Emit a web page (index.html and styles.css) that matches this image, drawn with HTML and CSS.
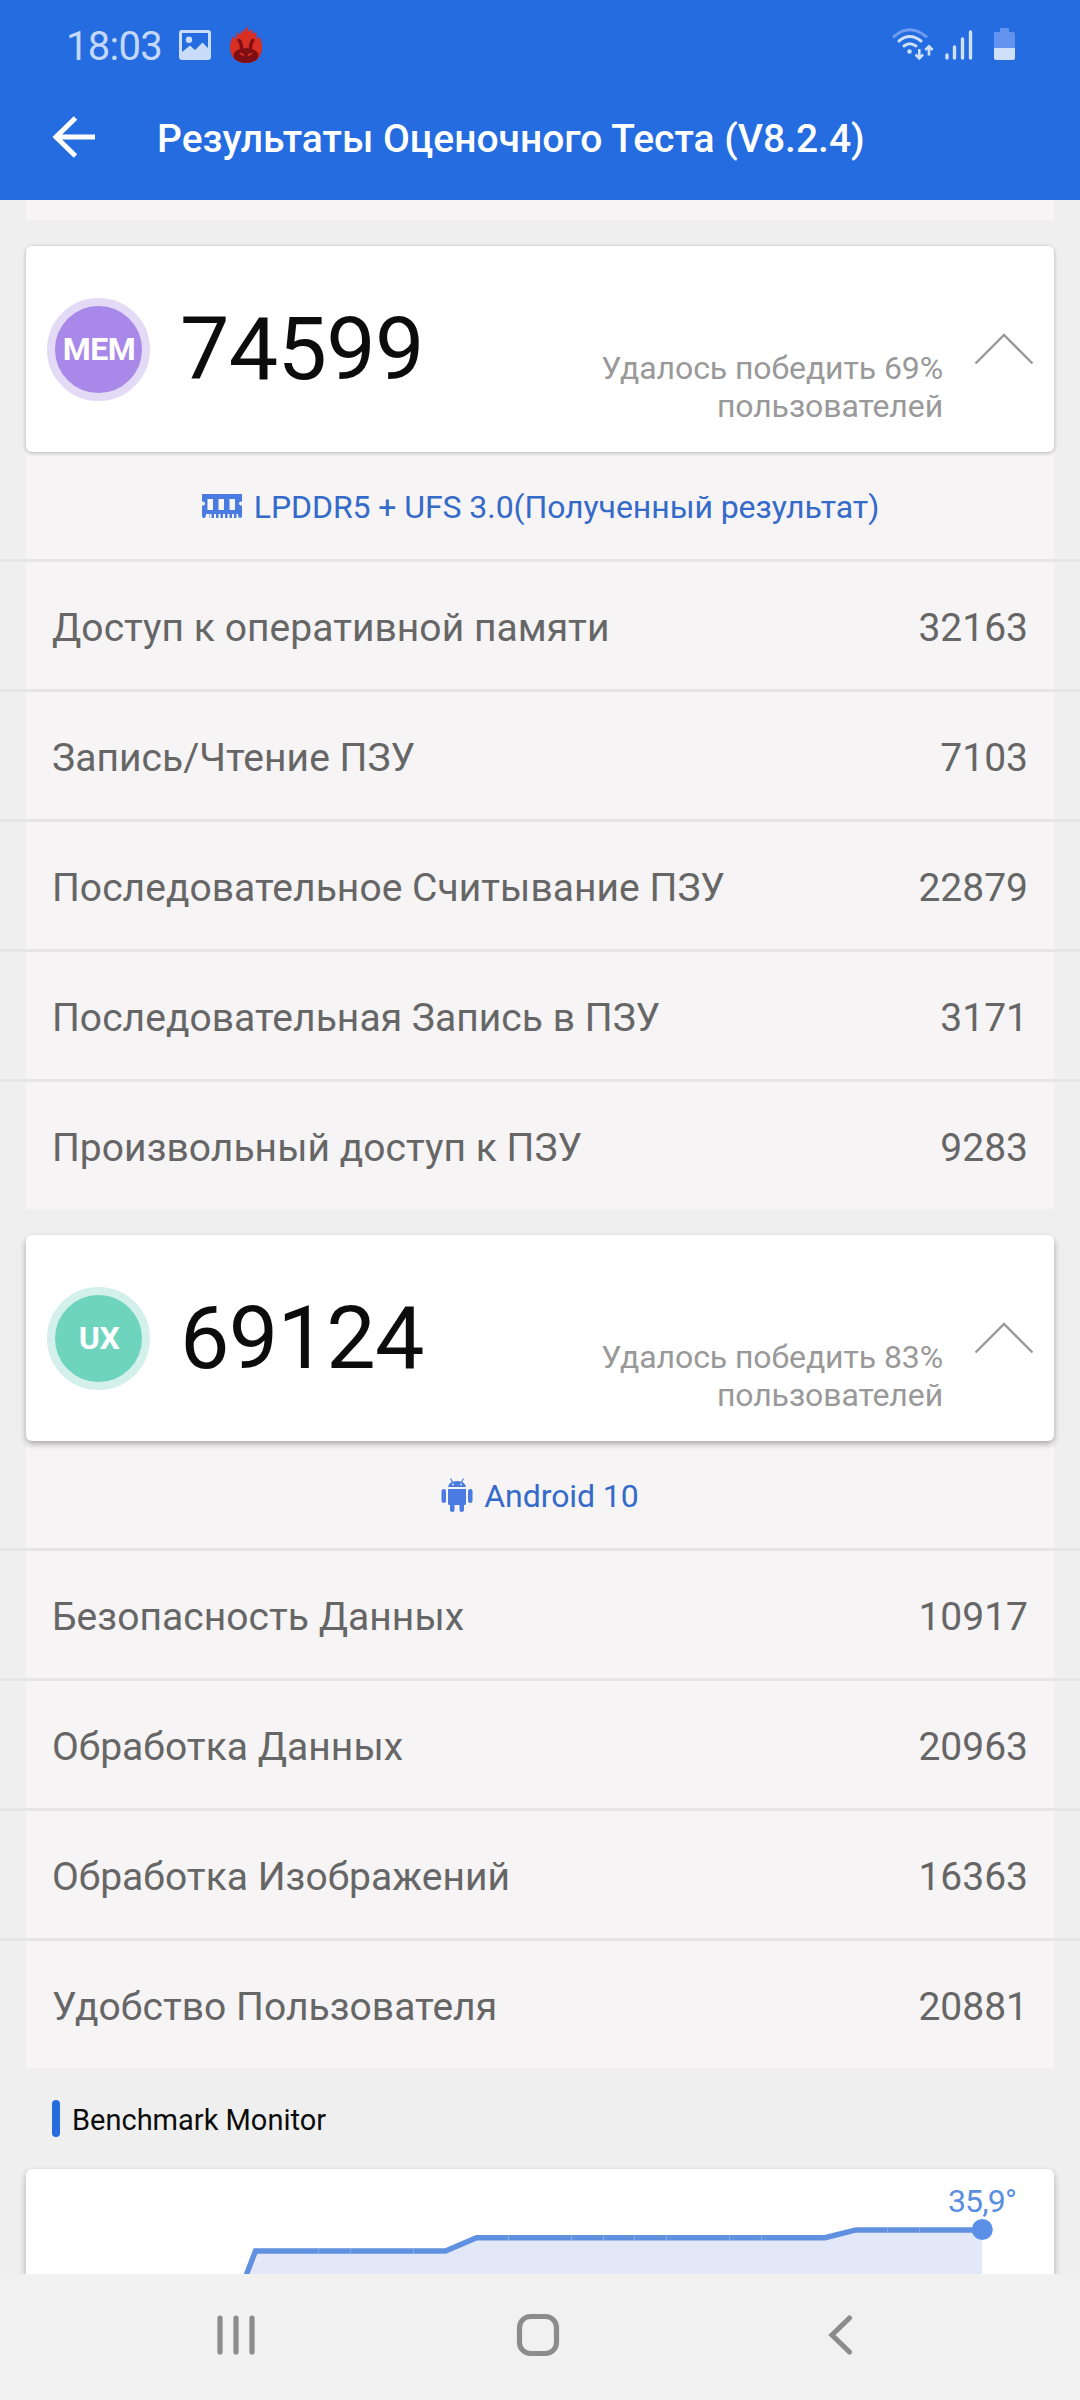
FILE: index.html
```
<!DOCTYPE html>
<html lang="ru">
<head>
<meta charset="utf-8">
<title>Результаты Оценочного Теста</title>
<link rel="stylesheet" href="styles.css">
</head>
<body>
<div class="screen">
  <header class="top">
    <div class="status">
      <span class="clock">18:03</span>
      <svg class="ic-photo" width="32" height="30" viewBox="0 0 32 30"><path fill="#c9dcfa" fill-rule="evenodd" d="M3 0H29Q32 0 32 3V27Q32 30 29 30H3Q0 30 0 27V3Q0 0 3 0ZM3 3V22L11 15.500L16 20L23.500 12.500L29 18V3ZM10 6.500A3.200 3.200 0 1 1 10 12.900A3.200 3.200 0 1 1 10 6.500Z"/></svg>
      <svg class="ic-antutu" width="34" height="38" viewBox="0 0 34 38"><path fill="#d82f22" d="M17 37C6 37 1 30 1 21C1 16 3 13 4 10L7 13L8 6L11 9L13 4L15 6L18 0L20 6L23 3L24 8L27 6L28 13L31 11C32 15 33 17 33 21C33 30 28 37 17 37Z"/><ellipse cx="17" cy="29.500" rx="12.500" ry="7.500" fill="#7e0e14"/><path d="M10 14.500Q12 15.500 12.500 22M24 14.500Q22 15.500 21.500 22" fill="none" stroke="#7e0e14" stroke-width="3.400" stroke-linecap="round"/><path d="M11.500 27.500L14.500 29M22.500 27.500L19.500 29" stroke="#d82f22" stroke-width="1.700" stroke-linecap="round"/></svg>
      <svg class="ic-signal" width="126" height="36" viewBox="0 0 126 36" fill="none" stroke-linecap="round"><path d="M2 9.500Q17.500 -4 34 9.500" stroke="#6f9ef0" stroke-width="3"/><path d="M7 14Q17.500 5 29 14M12 19Q17.500 14.500 24 19" stroke="#cfe0fb" stroke-width="3"/><circle cx="17.500" cy="24.500" r="2.300" fill="#cfe0fb"/><path d="M27.300 22V31M23.500 27.500L27.300 31.300L31 27.500M37 28.500V20M33.300 23L37 19.300L40.700 23" stroke="#cfe0fb" stroke-width="2.600" stroke-linecap="butt"/><path d="M55 28V31M62.500 20V31M70.500 12V31M78.500 5V31" stroke="#cfe0fb" stroke-width="3.400"/><path d="M102 5H108V1H117V5H121Q123 5 123 7V21H102Z" fill="#6293ee"/><path d="M102 21H123V31Q123 33 121 33H104Q102 33 102 31Z" fill="#cfe0fb"/></svg>
    </div>
    <div class="appbar">
      <svg class="ic-back" width="43" height="42" viewBox="0 0 43 42"><path d="M43 21H4M23.500 2L4 21L23.500 40" fill="none" stroke="#fff" stroke-width="5"/></svg>
      <h1>Результаты Оценочного Теста (V8.2.4)</h1>
    </div>
  </header>
  <main class="content">
    <div class="tail"></div>
    <section class="group">
      <div class="card">
        <div class="badge mem">MEM</div>
        <div class="score">74599</div>
        <div class="beat">Удалось победить 69%<br>пользователей</div>
        <svg class="chev" width="60" height="32" viewBox="0 0 60 32"><path d="M1.500 30.500L30 2L58.500 30.500" fill="none" stroke="#999" stroke-width="2.400"/></svg>
      </div>
      <div class="info mem-info">
        <svg width="42" height="26" viewBox="0 0 42 26"><path fill="#4a7be0" fill-rule="evenodd" d="M1 1H41V8.500Q38 8.500 38 10.500Q38 12.500 41 12.500V23Q41 25 39 25Q37 25 37 21H35.500V25H33V21H31V25H28.500V21H26.500V25H24V21H22V25H19.500V21H17.500V25H15V21H13V25H10.500V21H8.500V25H8V21H5Q5 25 3 25Q1 25 1 23V12.500Q4 12.500 4 10.500Q4 8.500 1 8.500ZM6.500 6V17H12V6ZM17.500 6V17H23V6ZM28.500 6V17H34V6Z"/></svg>
        <span>LPDDR5 + UFS 3.0(Полученный результат)</span>
      </div>
      <div class="row"><span>Доступ к оперативной памяти</span><span>32163</span></div>
      <div class="row"><span>Запись/Чтение ПЗУ</span><span>7103</span></div>
      <div class="row"><span>Последовательное Считывание ПЗУ</span><span>22879</span></div>
      <div class="row"><span>Последовательная Запись в ПЗУ</span><span>3171</span></div>
      <div class="row"><span>Произвольный доступ к ПЗУ</span><span>9283</span></div>
    </section>
    <section class="group">
      <div class="card raised">
        <div class="badge ux">UX</div>
        <div class="score">69124</div>
        <div class="beat">Удалось победить 83%<br>пользователей</div>
        <svg class="chev" width="60" height="32" viewBox="0 0 60 32"><path d="M1.500 30.500L30 2L58.500 30.500" fill="none" stroke="#999" stroke-width="2.400"/></svg>
      </div>
      <div class="info ux-info">
        <svg width="32" height="34" viewBox="0 0 32 34"><g fill="#4a7be0"><path fill-rule="evenodd" d="M7 9Q8 3 16 3Q24 3 25 9ZM12 5.500A.9 .9 0 1 0 12 7.300A.9 .9 0 1 0 12 5.500ZM20 5.500A.9 .9 0 1 0 20 7.300A.9 .9 0 1 0 20 5.500Z"/><path d="M7 11H25V25.500Q25 27 23.500 27H8.500Q7 27 7 25.500Z"/><rect x=".5" y="11" width="4.500" height="14" rx="2.200"/><rect x="27" y="11" width="4.500" height="14" rx="2.200"/><path d="M9 26H13.500V32Q13.500 34 11.300 34Q9 34 9 32ZM18.500 26H23V32Q23 34 20.700 34Q18.500 34 18.500 32Z"/></g><path d="M9.500 .5L11.500 4M22.500 .5L20.500 4" stroke="#4a7be0" stroke-width="1.200"/></svg>
        <span>Android 10</span>
      </div>
      <div class="row"><span>Безопасность Данных</span><span>10917</span></div>
      <div class="row"><span>Обработка Данных</span><span>20963</span></div>
      <div class="row"><span>Обработка Изображений</span><span>16363</span></div>
      <div class="row"><span>Удобство Пользователя</span><span>20881</span></div>
    </section>
    <h2 class="monitor-title">Benchmark Monitor</h2>
    <div class="monitor">
      <svg width="1028" height="105" viewBox="26 2169 1028 105">
        <path d="M246 2274L255.500 2251H445.500L476.500 2237.700H825L856 2230H982V2274Z" fill="#e2e8f8"/>
        <path d="M245.500 2277L255.500 2251H445.500L476.500 2237.700H825L856 2230H982" fill="none" stroke="#6090e0" stroke-width="5.400"/>
        <path d="M318.500 2248.500V2253.500M350.500 2248.500V2253.500M413.500 2248.500V2253.500M508.500 2235V2240M571.500 2235V2240M603.500 2235V2240M634.500 2235V2240M666.500 2235V2240M729.500 2235V2240M761.500 2235V2240M887.500 2227.500V2232.500M919.500 2227.500V2232.500" stroke="#86abea" stroke-width="1"/>
        <circle cx="982.300" cy="2229.500" r="10.500" fill="#5a90e8"/>
        <text x="982" y="2212" text-anchor="middle" class="temp">35,9°</text>
      </svg>
    </div>
  </main>
  <nav class="nav">
    <svg width="1080" height="126" viewBox="0 2274 1080 126" fill="none" stroke="#8c8c8c" stroke-width="5.200" stroke-linecap="round"><path d="M220 2318V2352M236 2318V2352M252 2318V2352"/><rect x="519.500" y="2316.500" width="37" height="37" rx="11"/><path d="M849.500 2318L832 2335L849.500 2352"/></svg>
  </nav>
</div>
</body>
</html>
```
FILE: styles.css
```
* { box-sizing: border-box; }
body { margin: 0; font-family: Roboto, "Liberation Sans", sans-serif; background: #efefef; }
svg { display: block; flex: none; }
.screen { width: 1080px; height: 2400px; display: flex; flex-direction: column; overflow: hidden; }
.top { height: 200px; background: #256ce0; flex: none; }
.status { height: 90px; display: flex; align-items: center; padding: 0 62px 0 66px; color: #c3d8fa; }
.clock { font-size: 40px; line-height: 48px; width: 113px; padding-top: 3px; letter-spacing: -.7px; }
.ic-antutu { margin-left: 18px; }
.ic-signal { margin-left: auto; }
.appbar { height: 94px; display: flex; align-items: center; padding-left: 52px; }
.appbar h1 { margin: 4px 0 0 62px; font-size: 39px; line-height: 48px; font-weight: 500; color: #fff; white-space: nowrap; }
.content { height: 2074px; flex: none; overflow: hidden; }
.tail { height: 20px; margin: 0 26px 26px; background: #f6f4f5; }
.group { margin-bottom: 26px; background: linear-gradient(#f6f4f5, #f6f4f5) center / 1028px 100% no-repeat; }
.card { height: 206px; margin: 0 26px; padding: 0 20px 0 21px; display: flex; align-items: center; background: #fff; border-radius: 6px; box-shadow: 0 1px 4px rgba(0, 0, 0, .28); }
.card.raised { box-shadow: 0 3px 6px rgba(0, 0, 0, .32); }
.badge { width: 103px; height: 103px; border-radius: 50%; border: 8px solid; display: flex; align-items: center; justify-content: center; color: #fff; font-size: 32px; font-weight: 700; letter-spacing: -.5px; padding-left: 1px; }
.mem { background: #a888e8; border-color: #e3daf6; }
.ux { background: #6fd4be; border-color: #d3f1ea; }
.score { margin-left: 30px; font-size: 88px; line-height: 100px; letter-spacing: -.7px; color: #0c0c0c; }
.beat { margin: 75px 31px 0 auto; font-size: 32px; line-height: 38px; letter-spacing: -.1px; text-align: right; color: #999; }
.info { height: 107px; padding-top: 2px; display: flex; align-items: center; justify-content: center; gap: 11px; font-size: 32px; letter-spacing: -.07px; color: #346ac8; }
.info svg { margin-top: -2px; }
.row { height: 130px; padding: 5px 52px 0; border-top: 3px solid #e6e5e5; display: flex; align-items: center; justify-content: space-between; font-size: 39px; color: #666; }
.row span:first-child { letter-spacing: .04px; }
.monitor-title { height: 37px; margin: 32px 52px; padding-top: 2px; display: flex; align-items: center; gap: 12px; font-size: 29px; font-weight: 400; color: #0c0c0c; }
.monitor-title::before { content: ""; width: 8px; height: 37px; margin-top: -2px; border-radius: 4px; background: #256ce0; }
.monitor { height: 130px; margin: 0 26px; background: #fff; border-radius: 6px 6px 0 0; box-shadow: 0 3px 6px rgba(0, 0, 0, .3); }
.temp { font-size: 32px; letter-spacing: -.8px; fill: #5a8ee0; }
.nav { height: 126px; flex: none; background: #f1f1f1; }
```
